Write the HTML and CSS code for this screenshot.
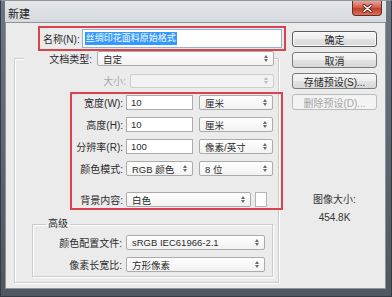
FILE: index.html
```html
<!DOCTYPE html>
<html lang="zh-CN">
<head>
    <meta charset="UTF-8">
    <title>新建</title>
    <link rel="stylesheet" href="styles.css">
</head>
<body>
    <div class="window">
        <div class="titlebar">
            <span class="title">新建</span>
            <button class="close">
                <svg width="11" height="9" viewBox="0 0 11 9">
                    <path d="M2 1.5L9 7.5M9 1.5L2 7.5" stroke="#5a1d16" stroke-width="3" stroke-linecap="round"/>
                    <path d="M2 1.5L9 7.5M9 1.5L2 7.5" stroke="#fff" stroke-width="1.6" stroke-linecap="round"/>
                </svg>
            </button>
        </div>
        <div class="content">
            <div class="main">
                <div class="mark name-row">
                    <span class="lbl">名称(N):</span>
                    <div class="name-field"><span class="hl">丝绸印花面料原始格式</span></div>
                </div>
                <fieldset class="group outer">
                    <legend class="doc-row">
                        <span class="lbl">文档类型:</span>
                        <div class="select doc-select">自定<i class="arr"></i></div>
                    </legend>
                    <div class="size-row">
                        <span class="lbl">大小:</span>
                        <div class="select disabled"><span></span><i class="arr"></i></div>
                    </div>
                    <div class="mark params">
                        <div class="prow">
                            <span class="lbl">宽度(W):</span>
                            <div class="input">10</div>
                            <div class="select unit">厘米<i class="arr"></i></div>
                        </div>
                        <div class="prow">
                            <span class="lbl">高度(H):</span>
                            <div class="input">10</div>
                            <div class="select unit">厘米<i class="arr"></i></div>
                        </div>
                        <div class="prow">
                            <span class="lbl">分辨率(R):</span>
                            <div class="input">100</div>
                            <div class="select unit">像素/英寸<i class="arr"></i></div>
                        </div>
                        <div class="prow">
                            <span class="lbl">颜色模式:</span>
                            <div class="select mode">RGB 颜色<i class="arr"></i></div>
                            <div class="select unit">8 位<i class="arr"></i></div>
                        </div>
                        <div class="prow bg-row">
                            <span class="lbl">背景内容:</span>
                            <div class="select bg-select">白色<i class="arr"></i></div>
                            <div class="swatch"></div>
                        </div>
                    </div>
                    <fieldset class="group adv">
                        <legend>高级</legend>
                        <div class="arow">
                            <span class="lbl">颜色配置文件:</span>
                            <div class="select">sRGB IEC61966-2.1<i class="arr"></i></div>
                        </div>
                        <div class="arow">
                            <span class="lbl">像素长宽比:</span>
                            <div class="select">方形像素<i class="arr"></i></div>
                        </div>
                    </fieldset>
                </fieldset>
            </div>
            <div class="side">
                <button class="btn default">确定</button>
                <button class="btn">取消</button>
                <button class="btn">存储预设(S)...</button>
                <button class="btn" disabled>删除预设(D)...</button>
                <div class="imgsize">
                    <p>图像大小:</p>
                    <p class="num">454.8K</p>
                </div>
            </div>
        </div>
    </div>
</body>
</html>
```
FILE: styles.css
```css
* {
    margin: 0;
    padding: 0;
    box-sizing: border-box;
}
body {
    font-family: "Liberation Sans", "Noto Sans CJK SC", sans-serif;
    font-size: 10px;
    color: #2b2b2b;
    background: #fff;
}
.window {
    width: 392px;
    height: 297px;
    border: 1px solid #353b44;
    border-top-color: #8f969e;
    background: linear-gradient(to bottom, #6d7580, #4f5761);
    padding: 0 5px 7px 4px;
    display: flex;
    flex-direction: column;
}
.titlebar {
    height: 21px;
    background: linear-gradient(#e4e6e9, #d6d9dd);
    display: flex;
    justify-content: space-between;
    align-items: flex-start;
}
.title {
    font-size: 11px;
    padding: 4px 0 0 3px;
    color: #222;
}
.close {
    width: 30px;
    height: 15px;
    margin-right: 4px;
    border: 1px solid #6e2a22;
    border-top: none;
    border-radius: 0 0 4px 4px;
    background: linear-gradient(#e8a598, #d2604c 45%, #c23e27 55%, #d6735f);
    display: flex;
    align-items: center;
    justify-content: center;
}
.content {
    flex: 1;
    display: flex;
    background: #ebebeb;
    border: 1px solid #8c939b;
}
.main {
    width: 272px;
    margin-left: 8px;
}
.mark {
    border: 2px solid #d8434d;
}
.lbl {
    white-space: nowrap;
    text-align: right;
}
.name-row {
    margin: 3px 0 0 24px;
    padding: 1px 2px;
    display: flex;
    align-items: center;
    gap: 2px;
}
.name-row .lbl {
    width: 38px;
}
.name-field {
    width: 202px;
    height: 19px;
    background: #fff;
    border: 1px solid #8fb2d9;
    padding-left: 2px;
    display: flex;
    align-items: center;
}
.hl {
    background: #3399ff;
    color: #fff;
    font-size: 9px;
    line-height: 13px;
    padding: 0 1px;
}
fieldset.group {
    border: 1px solid #cbcbcb;
    box-shadow: 1px 1px 0 #fff, inset 1px 1px 0 #fff;
}
.outer {
    width: 265px;
}
.doc-row {
    margin-left: 9px;
    padding: 0;
    display: flex;
    align-items: center;
    gap: 5px;
    background: #ebebeb;
}
.doc-row .lbl {
    width: 68px;
}
.select {
    height: 15px;
    border: 1px solid #ababab;
    border-radius: 2px;
    background: linear-gradient(#fefefe, #f2f2f2);
    display: flex;
    align-items: center;
    justify-content: space-between;
    padding: 0 5px;
    font-size: 9.5px;
    white-space: nowrap;
}
.doc-select {
    width: 177px;
}
.arr {
    width: 4px;
    height: 7px;
    position: relative;
    flex: none;
}
.arr::before,
.arr::after {
    content: "";
    position: absolute;
    left: 0;
    border-left: 2px solid transparent;
    border-right: 2px solid transparent;
}
.arr::before {
    top: 0;
    border-bottom: 3px solid #6a6a6a;
}
.arr::after {
    bottom: 0;
    border-top: 3px solid #6a6a6a;
}
.size-row {
    margin-top: 7px;
    display: flex;
    align-items: center;
    gap: 4px;
}
.size-row .lbl {
    width: 111px;
    color: #a9a9a9;
}
.select.disabled {
    width: 144px;
    height: 14px;
    background: #f2f2f2;
    border-color: #cdcdcd;
}
.select.disabled .arr::before {
    border-bottom-color: #bbb;
}
.select.disabled .arr::after {
    border-top-color: #bbb;
}
.params {
    margin: 4px -5px 0 55px;
    padding: 1px 0;
    display: flex;
    flex-direction: column;
    gap: 7px;
}
.prow {
    display: flex;
    align-items: center;
    height: 15px;
}
.prow .lbl {
    width: 51px;
    margin-right: 3px;
}
.input {
    width: 67px;
    height: 15px;
    background: #fff;
    border: 1px solid #ababab;
    padding-left: 4px;
    font-size: 9.5px;
    line-height: 13px;
}
.unit {
    width: 74px;
    margin-left: 6px;
}
.mode {
    width: 67px;
}
.bg-row {
    margin-top: 9px;
}
.bg-select {
    width: 125px;
}
.swatch {
    width: 12px;
    height: 15px;
    margin-left: 4px;
    background: #fff;
    border: 1px solid #b5b5b5;
}
.adv {
    margin: 8px 5px 5px 17px;
    padding: 0 0 4px;
}
.adv legend {
    margin-left: 13px;
    padding: 0 2px;
    line-height: 12px;
}
.arow {
    display: flex;
    align-items: center;
    height: 15px;
    margin-top: 5px;
}
.arow + .arow {
    margin-top: 7px;
}
.arow .lbl {
    width: 89px;
    margin-right: 4px;
}
.arow .select {
    width: 139px;
}
.side {
    width: 85px;
    margin-left: 6px;
    padding-top: 8px;
    display: flex;
    flex-direction: column;
    gap: 5px;
}
.btn {
    height: 16px;
    border: 1px solid #7a7a7a;
    border-radius: 3px;
    background: linear-gradient(#f6f6f6 0%, #eeeeee 48%, #e2e2e2 52%, #d8d8d8 100%);
    font-family: inherit;
    font-size: 10px;
    color: #2b2b2b;
}
.btn.default {
    border-color: #5c5c5c;
    box-shadow: inset 0 0 0 1px #fafafa;
}
.btn:disabled {
    color: #a5a5a5;
    border-color: #b8bcbf;
    background: #f3f3f3;
}
.imgsize {
    margin-top: 78px;
    text-align: center;
    line-height: 13px;
    color: #333;
}
.imgsize .num {
    margin-top: 5px;
}
```
